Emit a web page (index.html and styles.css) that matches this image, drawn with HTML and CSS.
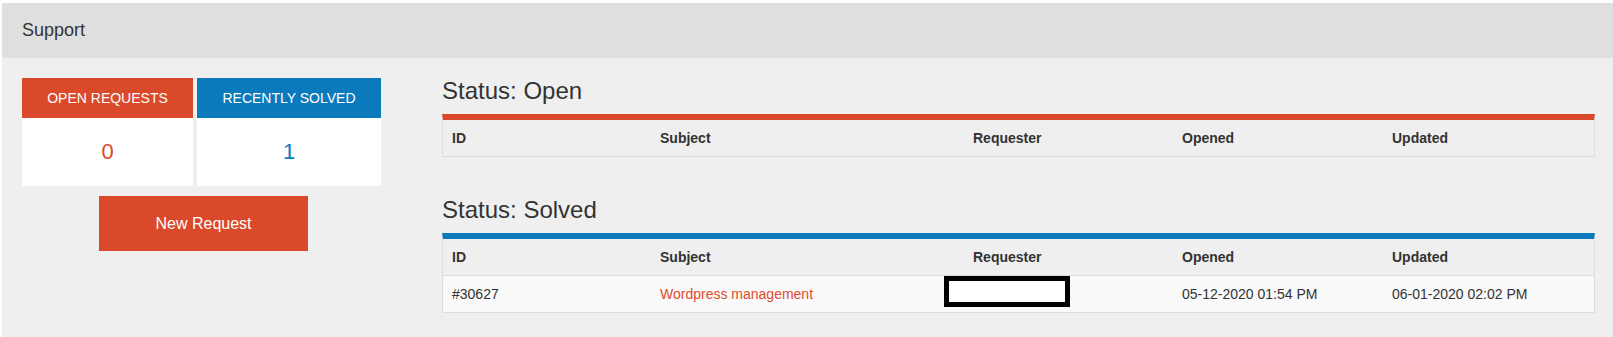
FILE: index.html
```html
<!DOCTYPE html>
<html>
<head>
<meta charset="utf-8">
<link rel="stylesheet" href="styles.css">
</head>
<body>
<div class="page">
  <div class="topbar">Support</div>
  <div class="content">
    <div class="left">
      <div class="stats">
        <div class="stat stat-open">
          <div class="stat-head orange-bg">OPEN REQUESTS</div>
          <div class="stat-body orange">0</div>
        </div>
        <div class="stat stat-solved">
          <div class="stat-head blue-bg">RECENTLY SOLVED</div>
          <div class="stat-body blue">1</div>
        </div>
      </div>
      <button class="btn">New Request</button>
    </div>
    <div class="right">
      <div class="section">
        <h2 class="title">Status: Open</h2>
        <div class="table open">
          <div class="row head">
            <div class="cell">ID</div>
            <div class="cell">Subject</div>
            <div class="cell">Requester</div>
            <div class="cell">Opened</div>
            <div class="cell">Updated</div>
          </div>
        </div>
      </div>
      <div class="section second">
        <h2 class="title">Status: Solved</h2>
        <div class="table solved">
          <div class="row head">
            <div class="cell">ID</div>
            <div class="cell">Subject</div>
            <div class="cell">Requester</div>
            <div class="cell">Opened</div>
            <div class="cell">Updated</div>
          </div>
          <div class="row body-row">
            <div class="cell">#30627</div>
            <div class="cell"><a class="link" href="#">Wordpress management</a></div>
            <div class="cell req"><span class="redact"></span></div>
            <div class="cell">05-12-2020 01:54 PM</div>
            <div class="cell">06-01-2020 02:02 PM</div>
          </div>
        </div>
      </div>
    </div>
  </div>
</div>
</body>
</html>
```

FILE: styles.css
```css
html, body {
  margin: 0;
  padding: 0;
  background: #ffffff;
}

body {
  font-family: "Liberation Sans", Arial, sans-serif;
  color: #333333;
}

.page {
  margin: 3px 0 0 2px;
  background: #efefef;
  min-height: 334px;
}

.topbar {
  height: 55px;
  line-height: 55px;
  background: #dfdfdf;
  padding-left: 20px;
  font-size: 18px;
  color: #333333;
}

.content {
  display: flex;
  gap: 57px;
  padding: 20px 18px 0 20px;
}

.left {
  width: 363px;
  flex: 0 0 363px;
  display: flex;
  flex-direction: column;
  align-items: center;
}

.stats {
  display: flex;
  gap: 4px;
  align-self: flex-start;
}

.stat {
  background: #ffffff;
}

.stat-open { width: 171px; }
.stat-solved { width: 184px; }

.stat-head {
  height: 40px;
  line-height: 40px;
  font-size: 14px;
  color: #ffffff;
  text-align: center;
  white-space: nowrap;
}

.orange-bg { background: #d9492a; }
.blue-bg { background: #0b7abd; }

.stat-body {
  height: 68px;
  line-height: 68px;
  font-size: 22px;
  text-align: center;
}

.orange { color: #d9492a; }
.blue { color: #0b7abd; }

.btn {
  margin-top: 10px;
  width: 209px;
  height: 55px;
  border: none;
  padding: 0;
  background: #d9492a;
  color: #ffffff;
  font-family: "Liberation Sans", Arial, sans-serif;
  font-size: 16px;
  line-height: 55px;
  cursor: pointer;
}

.right {
  flex: 1;
  min-width: 0;
}

.section.second {
  margin-top: 40px;
}

.title {
  margin: 0 0 10px 0;
  font-size: 24px;
  font-weight: normal;
  line-height: 26px;
  color: #333333;
}

.table {
  border: 1px solid #dddddd;
  border-top-width: 6px;
}

.table.open { border-top-color: #d9492a; }
.table.solved { border-top-color: #0b7abd; }

.row {
  display: grid;
  grid-template-columns: 208px 313px 209px 210px 1fr;
  height: 36px;
  font-size: 14px;
}

.row + .row {
  border-top: 1px solid #dddddd;
}

.row.head {
  background: #efefef;
  font-weight: bold;
  color: #333333;
}

.row.body-row {
  background: #f9f9f9;
}

.cell {
  padding: 0 9px;
  line-height: 37px;
  white-space: nowrap;
}

.link {
  color: #dc4d30;
  text-decoration: none;
}

.req {
  position: relative;
}

.redact {
  position: absolute;
  left: -20px;
  top: 0;
  width: 126px;
  height: 31px;
  box-sizing: border-box;
  border: 5px solid #000000;
  background: #ffffff;
}
```
